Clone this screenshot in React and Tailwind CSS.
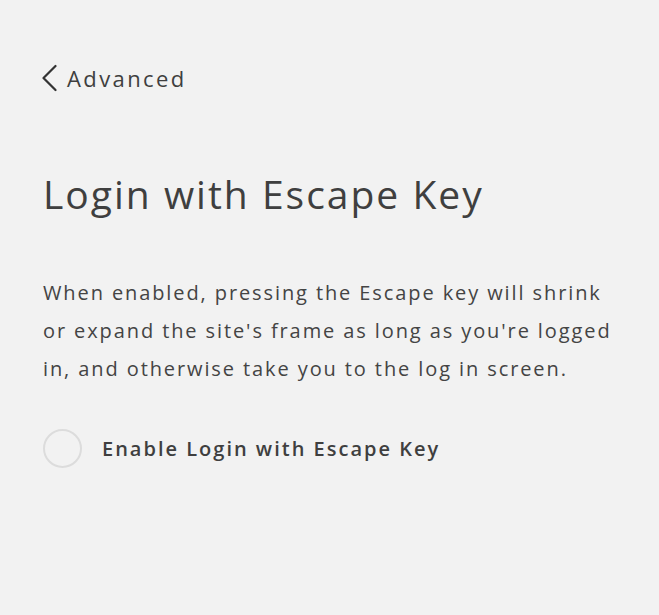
import React, { useState } from 'react';

const App = () => {
    const [enabled, setEnabled] = useState(false);

    return (
        <div
            className="w-[659px] h-[615px] bg-[#f2f2f2] text-[#3f3f3f] px-[43px] pt-[60px]"
            style={{ fontFamily: '"Open Sans", Lato, sans-serif' }}
        >
            <a href="#" className="flex items-center gap-[10px] h-[36px] text-[#3f3f3f]">
                <svg width="16" height="28" viewBox="0 0 16 28" fill="none" className="-ml-[2px]">
                    <path d="M14.5 2 L2.5 14 L14.5 26" stroke="#333" strokeWidth="2.2" strokeLinecap="round" strokeLinejoin="round" />
                </svg>
                <span className="text-[22px] tracking-[2.4px]">Advanced</span>
            </a>

            <h1 className="mt-[74px] text-[39px] leading-[48px] tracking-[2px] font-normal">Login with Escape Key</h1>

            <p className="mt-[56px] text-[20px] leading-[38px] tracking-[1.9px] text-[#444]">
                When enabled, pressing the Escape key will shrink or expand the site's frame as long as you're logged in, and otherwise take you to the log in screen.
            </p>

            <label className="mt-[41px] flex items-center gap-[20px] cursor-pointer">
                <button
                    onClick={() => setEnabled(!enabled)}
                    className={`w-[39px] h-[39px] rounded-full border-[2.5px] border-[#dcdcdc] ${enabled ? 'bg-[#3f3f3f]' : 'bg-transparent'}`}
                />
                <span className="text-[20px] font-semibold tracking-[2px]">Enable Login with Escape Key</span>
            </label>
        </div>
    );
};

export default App;
